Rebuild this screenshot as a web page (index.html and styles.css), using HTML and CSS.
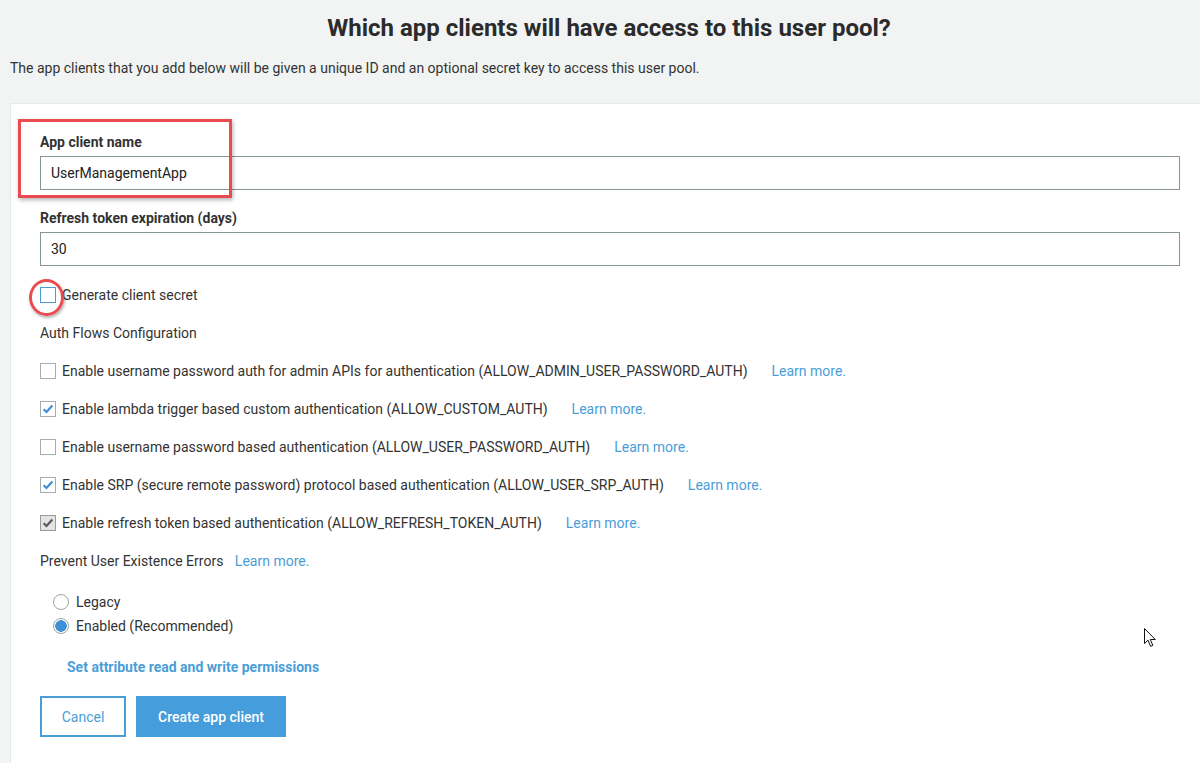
FILE: index.html
```html
<!DOCTYPE html>
<html lang="en">
<head>
<meta charset="utf-8">
<title>App clients</title>
<link rel="stylesheet" href="styles.css">
</head>
<body>
<div class="page">
  <h1 class="title">Which app clients will have access to this user pool?</h1>
  <p class="intro">The app clients that you add below will be given a unique ID and an optional secret key to access this user pool.</p>
  <div class="panel">
    <div class="highlight-box"></div>
    <div class="highlight-circle"></div>
    <svg class="cursor" width="13" height="20" viewBox="0 0 13 20"><path d="M0.5 0.5 L0.5 15.5 L4 12.2 L6.6 18.4 L8.8 17.4 L6.3 11.5 L11.3 11.5 Z" fill="#fff" stroke="#111" stroke-width="1" stroke-linejoin="round"/></svg>

    <label class="field-label">App client name</label>
    <div class="input">UserManagementApp</div>

    <label class="field-label gap">Refresh token expiration (days)</label>
    <div class="input">30</div>

    <div class="check-row gap-lg">
      <span class="box focus"></span>
      <span class="check-text">Generate client secret</span>
    </div>

    <div class="section gap">Auth Flows Configuration</div>

    <div class="check-row gap">
      <span class="box"></span>
      <span class="check-text">Enable username password auth for admin APIs for authentication (ALLOW_ADMIN_USER_PASSWORD_AUTH)</span>
      <a class="learn">Learn more.</a>
    </div>
    <div class="check-row gap">
      <span class="box"><svg viewBox="0 0 16 16"><path d="M3 8.3 L6.3 11.4 L13 4" fill="none" stroke="#3d8fd6" stroke-width="2.6"/></svg></span>
      <span class="check-text">Enable lambda trigger based custom authentication (ALLOW_CUSTOM_AUTH)</span>
      <a class="learn">Learn more.</a>
    </div>
    <div class="check-row gap">
      <span class="box"></span>
      <span class="check-text">Enable username password based authentication (ALLOW_USER_PASSWORD_AUTH)</span>
      <a class="learn">Learn more.</a>
    </div>
    <div class="check-row gap">
      <span class="box"><svg viewBox="0 0 16 16"><path d="M3 8.3 L6.3 11.4 L13 4" fill="none" stroke="#3d8fd6" stroke-width="2.6"/></svg></span>
      <span class="check-text">Enable SRP (secure remote password) protocol based authentication (ALLOW_USER_SRP_AUTH)</span>
      <a class="learn">Learn more.</a>
    </div>
    <div class="check-row gap">
      <span class="box disabled"><svg viewBox="0 0 16 16"><path d="M3 8.3 L6.3 11.4 L13 4" fill="none" stroke="#5a5a5a" stroke-width="2.6"/></svg></span>
      <span class="check-text">Enable refresh token based authentication (ALLOW_REFRESH_TOKEN_AUTH)</span>
      <a class="learn">Learn more.</a>
    </div>

    <div class="section gap">Prevent User Existence Errors <a class="learn near">Learn more.</a></div>

    <div class="radios">
      <div class="radio-row"><span class="radio"></span><span>Legacy</span></div>
      <div class="radio-row"><span class="radio on"></span><span>Enabled (Recommended)</span></div>
    </div>

    <a class="perm-link">Set attribute read and write permissions</a>

    <div class="buttons">
      <button class="btn cancel">Cancel</button>
      <button class="btn primary">Create app client</button>
    </div>
  </div>
</div>
</body>
</html>
```

FILE: styles.css
```css
* { box-sizing: border-box; }
html, body { margin: 0; padding: 0; }
body {
  background: #f2f3f3;
  font-family: Roboto, "Liberation Sans", Arial, sans-serif;
  color: #444;
  width: 1200px;
  height: 763px;
  overflow: hidden;
}
.page {
  padding-top: 14px;
  height: 763px;
  display: flex;
  flex-direction: column;
}
.title {
  margin: 0;
  text-align: center;
  font-size: 24px;
  line-height: 28px;
  font-weight: 700;
  color: #2b2b2b;
  padding-left: 18px;
}
.intro {
  margin: 12px 0 0 10px;
  font-size: 14px;
  line-height: 28px;
  color: #333;
}
.panel {
  position: relative;
  flex: 1;
  margin: 21px 0 0 10px;
  background: #fff;
  border-top: 1px solid #e6e9e9;
  border-left: 1px solid #e6e9e9;
  padding: 28px 20px 0 29px;
  overflow: hidden;
}
.field-label {
  display: block;
  font-size: 14px;
  line-height: 20px;
  font-weight: 700;
  color: #333;
  margin-bottom: 4px;
}
.gap { margin-top: 18px; }
.gap-lg { margin-top: 19px; }
.input {
  height: 34px;
  border: 1px solid #879596;
  padding: 0 10px;
  font-size: 14px;
  line-height: 32px;
  color: #222;
}
.check-row {
  display: flex;
  align-items: center;
  height: 20px;
  font-size: 14px;
  color: #333;
}
.box {
  width: 16px;
  height: 16px;
  border: 1px solid #a4aeb0;
  background: #fff;
  margin-right: 6px;
  flex: none;
  display: flex;
}
.box svg { width: 14px; height: 14px; }
.box.focus { border-color: #4b9bd8; }
.box.disabled { background: #e4e4e4; border-color: #9a9a9a; }
.learn { color: #4a9ed8; margin-left: 24px; }
.learn.near { margin-left: 8px; }
.section {
  font-size: 14px;
  line-height: 20px;
  color: #333;
}
.radios { margin: 21px 0 0 13px; }
.radio-row {
  display: flex;
  align-items: center;
  height: 20px;
  font-size: 14px;
  color: #333;
  margin-bottom: 4px;
}
.radio {
  width: 16px;
  height: 16px;
  border-radius: 50%;
  border: 1px solid #9aa4a6;
  margin-right: 7px;
  flex: none;
  background: #fff;
}
.radio.on {
  background: radial-gradient(circle, #3d8fd6 0 5.5px, #fff 6px);
}
.perm-link {
  display: block;
  margin: 21px 0 0 27px;
  font-size: 14px;
  line-height: 20px;
  font-weight: 700;
  color: #4a9ed8;
}
.buttons {
  display: flex;
  gap: 10px;
  margin-top: 19px;
}
.btn {
  height: 41px;
  font-family: inherit;
  font-size: 14px;
  cursor: pointer;
}
.cancel {
  width: 86px;
  background: #fff;
  border: 2px solid #4a9ed8;
  color: #4a9ed8;
}
.primary {
  width: 150px;
  background: #469ddb;
  border: none;
  color: #fff;
  font-weight: 500;
}
.highlight-box {
  position: absolute;
  left: 7px;
  top: 15px;
  width: 214px;
  height: 79px;
  border: 3px solid #ea4b50;
  box-shadow: 1px 2px 4px rgba(0,0,0,0.3);
}
.highlight-circle {
  position: absolute;
  left: 18px;
  top: 175px;
  width: 35px;
  height: 37px;
  border: 3px solid #ea4b50;
  border-radius: 50%;
  box-shadow: 1px 2px 3px rgba(0,0,0,0.3);
}
.cursor {
  position: absolute;
  left: 1133px;
  top: 524px;
}
```
